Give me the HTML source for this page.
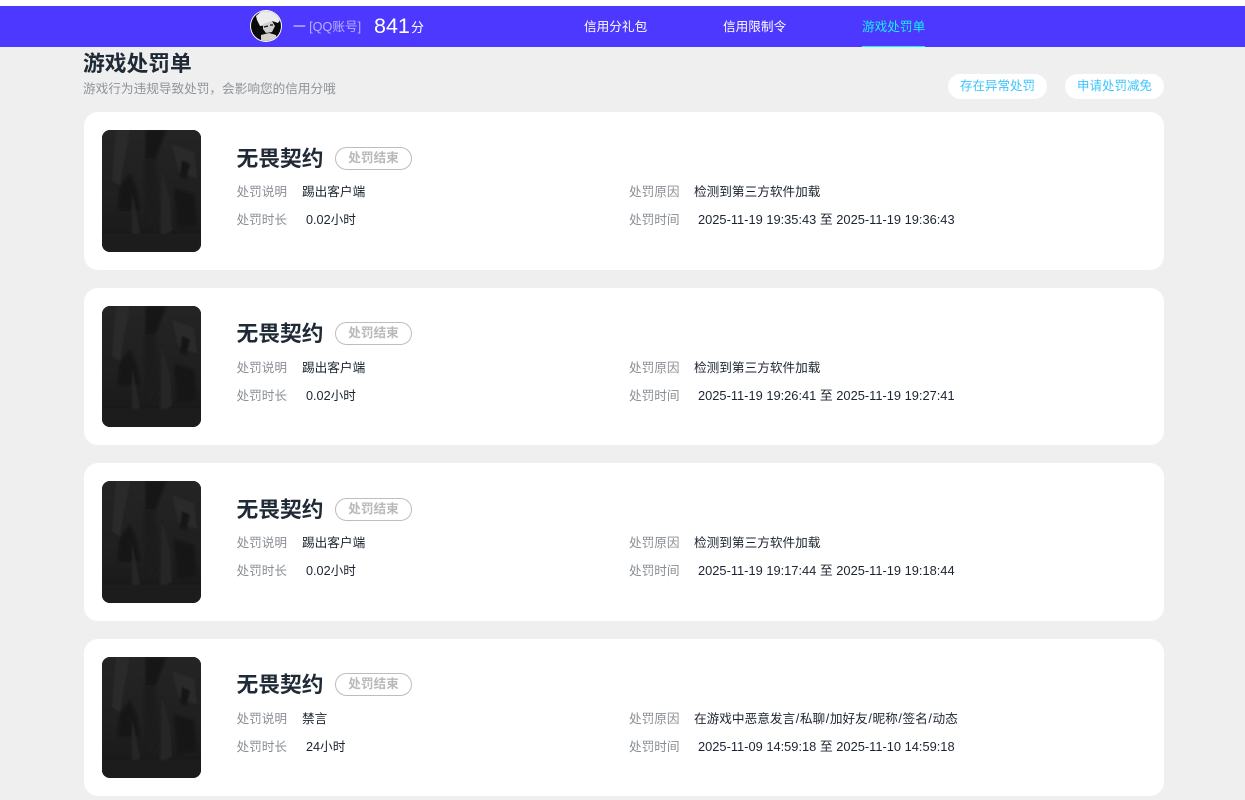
<!DOCTYPE html>
<html lang="zh-CN"><head><meta charset="utf-8"><title>游戏处罚单</title>
<style>
*{margin:0;padding:0;box-sizing:border-box}
html,body{width:1245px;height:800px;overflow:hidden;background:#efefef}
body{position:relative;font-family:"Liberation Sans","WenQuanYi Zen Hei","Noto Sans CJK SC",sans-serif;font-size:12.65px;color:#1c2430}
.a{position:absolute;white-space:nowrap;line-height:20px}
.top{position:absolute;left:0;top:0;width:1245px;height:6px;background:#fff}
.bar{position:absolute;left:0;top:6px;width:1245px;height:41px;background:#4d38ff}
.card{position:absolute;left:84px;width:1080px;background:#fff;border-radius:14px}
.thumb{position:absolute;left:18px;top:18px;width:99px;height:122px;border-radius:8px;overflow:hidden;background:#1c1c1c}
.t{left:152.5px;top:32px;font-size:21.75px;font-weight:bold;line-height:30px;color:#1f2a36}
.tag{position:absolute;left:251px;top:35px;width:77px;height:23px;border:1px solid #bdbdbd;border-radius:12px;font-size:12.65px;font-weight:bold;color:#b9b9b9;text-align:center;line-height:20px}
.l{color:#8a8f96;left:152.5px}
.r{color:#8a8f96;left:545px}
.d{font-size:12.85px;left:614px;top:98px}
.s{padding:0 .6px}
.btn{position:absolute;top:74px;height:25px;width:99px;background:#fff;border-radius:13px;color:#3cc4ff;text-align:center;line-height:25px;font-size:12.5px}
</style></head><body>
<div class="top"></div>
<div class="bar"></div>
<svg class="a" style="left:250px;top:10px" width="32" height="32" viewBox="0 0 32 32">
<defs><clipPath id="av"><circle cx="16" cy="16" r="15"/></clipPath></defs>
<circle cx="16" cy="16" r="16" fill="#fff"/>
<g clip-path="url(#av)"><rect width="32" height="32" fill="#0a0a0a"/>
<path d="M6 6L13 0h12l6 9-3 4-6-2-5 4-7 1-3-6z" fill="#ececec"/>
<path d="M13 14l9-3 3 5-3 6-6 1-3-4z" fill="#cfcfcf"/>
<path d="M11 25l8-2 7 2 1 7H11z" fill="#d5d0c8"/>
<path d="M14 17l4-1M20 15l3 0" stroke="#111" stroke-width="1.2"/></g></svg>
<div class="a" style="left:293px;top:17px;color:#b9b1ff;font-size:12.65px"><span style="color:#e8e6ff">一</span> [QQ账号]</div>
<div class="a" style="left:374px;top:16px;color:#fff;font-size:21.5px">841</div>
<div class="a" style="left:411px;top:18px;color:#fff;font-size:13px">分</div>
<div class="a" style="left:584px;top:17px;color:#fff">信用分礼包</div>
<div class="a" style="left:723px;top:17px;color:#fff">信用限制令</div>
<div class="a" style="left:862px;top:17px;color:#19f0f0">游戏处罚单</div>
<div style="position:absolute;left:862px;top:46px;width:63px;height:1px;background:#19f0f0"></div>

<div class="a" style="left:83px;top:50px;font-size:21.75px;font-weight:bold;line-height:28px;color:#1f2a36">游戏处罚单</div>
<div class="a" style="left:83px;top:79px;color:#8f9499">游戏行为违规导致处罚，会影响您的信用分哦</div>
<div class="btn" style="left:948px">存在异常处罚</div>
<div class="btn" style="left:1065px">申请处罚减免</div>

<svg width="0" height="0" style="position:absolute"><defs>
<linearGradient id="g" x1="0" y1="0" x2="0" y2="1"><stop offset="0" stop-color="#242424"/><stop offset=".6" stop-color="#1f1f1f"/><stop offset="1" stop-color="#171717"/></linearGradient>
<filter id="b" x="-10%" y="-10%" width="120%" height="120%"><feGaussianBlur stdDeviation="1"/></filter>
<symbol id="art" viewBox="0 0 99 122">
<rect width="99" height="122" fill="url(#g)"/>
<g filter="url(#b)">
<path d="M14 0h14L22 30 18 56 10 50z" fill="#2c2c2c"/>
<path d="M70 14l22 8 3 26-18-6z" fill="#292929"/>
<path d="M44 0h20l-6 16-8 22-6-10z" fill="#171717"/>
<path d="M18 56l10-12 6 14 4 22H16z" fill="#171717"/>
<path d="M42 28l10 0 6 52-12 20-4-50z" fill="#1a1a1a"/>
<path d="M60 40l8 30 2 30-12 8z" fill="#262626"/>
<path d="M72 58l20 6 2 30-18 4z" fill="#191919"/>
<path d="M30 62l8 40-8 6z" fill="#262626"/>
<path d="M80 30l8 4-4 16-6-4z" fill="#151515"/>
<path d="M0 104h99v18H0z" fill="#1a1a1a"/>
</g>
</symbol></defs></svg>

<div class="card" style="top:112px;height:158px">
<svg class="thumb" viewBox="0 0 99 122"><use href="#art"/></svg>
<div class="a t">无畏契约</div><div class="tag">处罚结束</div>
<div class="a l" style="top:70px">处罚说明</div><div class="a" style="left:218px;top:70px">踢出客户端</div>
<div class="a l" style="top:98px">处罚时长</div><div class="a" style="left:222px;top:98px">0.02小时</div>
<div class="a r" style="top:70px">处罚原因</div><div class="a" style="left:610px;top:70px">检测到第三方软件加载</div>
<div class="a r" style="top:98px">处罚时间</div><div class="a d">2025-11-19 19:35:43 至 2025-11-19 19:36:43</div>
</div>

<div class="card" style="top:288px;height:157px">
<svg class="thumb" style="height:121px" viewBox="0 0 99 122" preserveAspectRatio="none"><use href="#art"/></svg>
<div class="a t" style="top:31px">无畏契约</div><div class="tag" style="top:34px">处罚结束</div>
<div class="a l" style="top:70px">处罚说明</div><div class="a" style="left:218px;top:70px">踢出客户端</div>
<div class="a l" style="top:98px">处罚时长</div><div class="a" style="left:222px;top:98px">0.02小时</div>
<div class="a r" style="top:70px">处罚原因</div><div class="a" style="left:610px;top:70px">检测到第三方软件加载</div>
<div class="a r" style="top:98px">处罚时间</div><div class="a d">2025-11-19 19:26:41 至 2025-11-19 19:27:41</div>
</div>

<div class="card" style="top:463px;height:158px">
<svg class="thumb" viewBox="0 0 99 122"><use href="#art"/></svg>
<div class="a t">无畏契约</div><div class="tag">处罚结束</div>
<div class="a l" style="top:70px">处罚说明</div><div class="a" style="left:218px;top:70px">踢出客户端</div>
<div class="a l" style="top:98px">处罚时长</div><div class="a" style="left:222px;top:98px">0.02小时</div>
<div class="a r" style="top:70px">处罚原因</div><div class="a" style="left:610px;top:70px">检测到第三方软件加载</div>
<div class="a r" style="top:98px">处罚时间</div><div class="a d">2025-11-19 19:17:44 至 2025-11-19 19:18:44</div>
</div>

<div class="card" style="top:639px;height:157px">
<svg class="thumb" style="height:121px" viewBox="0 0 99 122" preserveAspectRatio="none"><use href="#art"/></svg>
<div class="a t" style="top:31px">无畏契约</div><div class="tag" style="top:34px">处罚结束</div>
<div class="a l" style="top:70px">处罚说明</div><div class="a" style="left:218px;top:70px">禁言</div>
<div class="a l" style="top:98px">处罚时长</div><div class="a" style="left:222px;top:98px">24小时</div>
<div class="a r" style="top:70px">处罚原因</div><div class="a" style="left:610px;top:70px">在游戏中恶意发言<span class="s">/</span>私聊<span class="s">/</span>加好友<span class="s">/</span>昵称<span class="s">/</span>签名<span class="s">/</span>动态</div>
<div class="a r" style="top:98px">处罚时间</div><div class="a d">2025-11-09 14:59:18 至 2025-11-10 14:59:18</div>
</div>
</body></html>
